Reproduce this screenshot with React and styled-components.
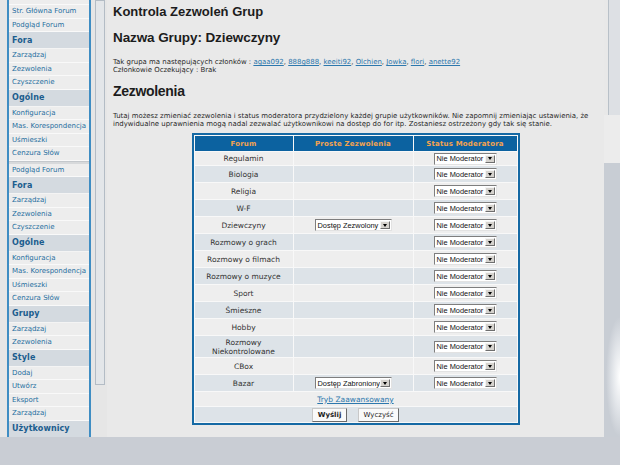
import React from 'react'
import styled, { createGlobalStyle } from 'styled-components'

const Global = createGlobalStyle`
  html, body {
    margin: 0;
    padding: 0;
    background: #c9cdd4;
  }
  body {
    font-family: "DejaVu Sans", Verdana, sans-serif;
  }
`

const Desktop = styled.div`
  width: 620px;
  height: 465px;
  overflow: hidden;
  display: flex;
  flex-direction: column;
  background: #c9cdd4;
`
const Frames = styled.div`
  display: flex;
  height: 437px;
  flex: none;
`
const LeftFrame = styled.div`
  width: 107px;
  flex: none;
  display: flex;
  align-items: flex-start;
  background: #e6e6e6;
  padding-left: 7px;
  box-sizing: border-box;
`
const SideNav = styled.nav`
  width: 84px;
  height: 437px;
  flex: none;
  box-sizing: border-box;
  border-left: 2px solid #3f8dc3;
  border-right: 2px solid #3f8dc3;
  background: #ededed;
  display: flex;
  flex-direction: column;
  overflow: hidden;
`
const NavItem = styled.div`
  height: ${p => p.h || 12.5}px;
  flex: none;
  border-bottom: 1px solid #f9f9f9;
  padding-left: 3px;
  display: flex;
  align-items: center;
  overflow: hidden;
  white-space: nowrap;
  font-size: 7px;
  color: #1f6e9f;
`
const NavHead = styled.div`
  height: 16px;
  flex: none;
  border-bottom: 1px solid #f4f4f4;
  background: #d4dae0;
  padding-left: 3px;
  display: flex;
  align-items: center;
  font-size: 8px;
  font-weight: bold;
  letter-spacing: 0.1px;
  color: #1b5d8e;
`
const NavSeam = styled.div`
  height: 3px;
  flex: none;
  background: #d7d9db;
  border-top: 1px solid #c4c8cc;
  box-sizing: border-box;
`
const ScrollTrack = styled.div`
  width: 10px;
  height: 385px;
  margin-left: 4px;
  flex: none;
  box-sizing: border-box;
  background: #e3e6e9;
  border: 1px solid #b3bcc5;
`

const Main = styled.main`
  flex: 1;
  background: #e9e9e9;
  padding: 4px 6px 0;
  overflow: hidden;
  color: #222;
`
const Title = styled.h1`
  margin: 0;
  font: bold 13px/16px "Liberation Sans", Arial, sans-serif;
  color: #1c1c1c;
`
const GroupName = styled.h2`
  margin: 10px 0 0;
  font: bold 13.5px/16px "Liberation Sans", Arial, sans-serif;
  letter-spacing: -0.1px;
  color: #1c1c1c;
`
const Small = styled.div`
  font-size: 6.95px;
  line-height: 8px;
  margin-top: ${p => p.mt || 0}px;
  color: #2a2a2a;
  white-space: nowrap;
`
const Link = styled.a`
  color: #2d78ad;
  text-decoration: underline;
`
const Section = styled.h2`
  margin: 9px 0 0;
  font: bold 14px/17px "Liberation Sans", Arial, sans-serif;
  letter-spacing: -0.3px;
  color: #1c1c1c;
`

const Table = styled.table`
  margin: 5px auto 0;
  width: 328px;
  border: 2px solid #1569a4;
  border-collapse: separate;
  border-spacing: 1px;
  background: #f8f8f8;
  table-layout: fixed;
`
const Th = styled.th`
  height: 15px;
  padding: 0;
  background: #0c62a0;
  color: #f4a24f;
  font-size: 7px;
  font-weight: bold;
  letter-spacing: 0.2px;
`
const Td = styled.td`
  height: ${p => p.h || 16}px;
  padding: 0;
  text-align: center;
  vertical-align: middle;
  font-size: 7.5px;
  line-height: 9px;
  color: #333;
  background: ${p => (p.dark ? '#dde3e8' : '#eeeeee')};
`
const SelectBox = styled.span`
  display: inline-flex;
  align-items: center;
  justify-content: space-between;
  vertical-align: middle;
  width: ${p => p.w}px;
  height: 12px;
  box-sizing: border-box;
  padding-left: 2px;
  padding-right: 1px;
  background: #fff;
  border: 1px solid;
  border-color: #7e7e7e #e2e2e2 #e2e2e2 #7e7e7e;
  font: 7.4px "Liberation Sans", Arial, sans-serif;
  color: #111;
  text-align: left;
  white-space: nowrap;
  overflow: hidden;
`
const Arrow = styled.span`
  width: 10px;
  height: 8px;
  flex: none;
  box-sizing: border-box;
  background: #d6d3ce;
  border: 1px solid;
  border-color: #f4f4f4 #6e6e6e #6e6e6e #f4f4f4;
  display: flex;
  align-items: center;
  justify-content: center;
  &::after {
    content: '';
    border-top: 3px solid #000;
    border-left: 2.5px solid transparent;
    border-right: 2.5px solid transparent;
  }
`
const Buttons = styled.div`
  display: flex;
  justify-content: center;
  gap: 11px;
`
const Button = styled.button`
  height: 14px;
  min-width: ${p => p.w}px;
  padding: 0 4px;
  box-sizing: border-box;
  background: #fafafa;
  border: 1px solid;
  border-color: #c8c8c8 #6a6a6a #6a6a6a #c8c8c8;
  font-family: "DejaVu Sans", Verdana, sans-serif;
  font-size: 7px;
  font-weight: ${p => (p.bold ? 'bold' : 'normal')};
  color: #222;
  cursor: pointer;
`
const Footer = styled.div`
  margin-top: 11px;
  text-align: center;
  font-size: 6.5px;
  color: #333;
`

const RightEdge = styled.div`
  width: 16px;
  flex: none;
  display: flex;
  flex-direction: column;
`
const RightTop = styled.div`
  height: 115px;
  flex: none;
  background: #e8e8e8;
  padding-left: 4px;
  display: flex;
`
const RightTrack = styled.div`
  flex: 1;
  background: #dde0e4;
  border-left: 1px solid #b8c0c8;
`
const RightMid = styled.div`
  height: 48px;
  flex: none;
  background: #ececec;
`
const RightGlow = styled.div`
  flex: 1;
  background: radial-gradient(ellipse 14px 60px at 100% 78%, #ffffff 0%, #e4e7eb 50%, #c8cdd4 100%);
`
const BottomBar = styled.div`
  flex: 1;
  background: #c9cdd4;
`

const nav = [
  ['i', '', 4],
  ['i', 'Str. Główna Forum'],
  ['i', 'Podgląd Forum'],
  ['h', 'Fora'],
  ['i', 'Zarządzaj'],
  ['i', 'Zezwolenia'],
  ['i', 'Czyszczenie'],
  ['h', 'Ogólne'],
  ['i', 'Konfiguracja'],
  ['i', 'Mas. Korespondencja'],
  ['i', 'Uśmieszki'],
  ['i', 'Cenzura Słów'],
  ['s'],
  ['i', 'Podgląd Forum'],
  ['h', 'Fora'],
  ['i', 'Zarządzaj'],
  ['i', 'Zezwolenia'],
  ['i', 'Czyszczenie'],
  ['h', 'Ogólne'],
  ['i', 'Konfiguracja'],
  ['i', 'Mas. Korespondencja'],
  ['i', 'Uśmieszki'],
  ['i', 'Cenzura Słów'],
  ['h', 'Grupy'],
  ['i', 'Zarządzaj'],
  ['i', 'Zezwolenia'],
  ['h', 'Style'],
  ['i', 'Dodaj'],
  ['i', 'Utwórz'],
  ['i', 'Eksport'],
  ['i', 'Zarządzaj'],
  ['h', 'Użytkownicy'],
]

const forums = [
  { name: 'Regulamin', h: 13 },
  { name: 'Biologia' },
  { name: 'Religia' },
  { name: 'W-F' },
  { name: 'Dziewczyny', perm: 'Dostęp Zezwolony' },
  { name: 'Rozmowy o grach' },
  { name: 'Rozmowy o filmach' },
  { name: 'Rozmowy o muzyce' },
  { name: 'Sport' },
  { name: 'Śmieszne' },
  { name: 'Hobby' },
  { name: 'Rozmowy Niekontrolowane', h: 21 },
  { name: 'CBox' },
  { name: 'Bazar', perm: 'Dostęp Zabroniony' },
]

const members = ['agaa092', '888g888', 'keeiti92', 'Olchien', 'Jowka', 'flori', 'anette92']

function Select({ w, children }) {
  return (
    <SelectBox w={w}>
      {children}
      <Arrow />
    </SelectBox>
  )
}

function App() {
  return (
    <Desktop>
      <Global />
      <Frames>
        <LeftFrame>
          <SideNav>
            {nav.map(([t, label, h], i) => {
              if (t === 'h') return <NavHead key={i}>{label}</NavHead>
              if (t === 's') return <NavSeam key={i} />
              return <NavItem key={i} h={h}>{label}</NavItem>
            })}
          </SideNav>
          <ScrollTrack />
        </LeftFrame>

        <Main>
          <Title>Kontrola Zezwoleń Grup</Title>
          <GroupName>Nazwa Grupy: Dziewczyny</GroupName>
          <Small mt={12}>
            Tak grupa ma następujących członków :{' '}
            {members.map((m, i) => (
              <React.Fragment key={m}>
                <Link href="#">{m}</Link>
                {i < members.length - 1 ? ', ' : ''}
              </React.Fragment>
            ))}
          </Small>
          <Small>Członkowie Oczekujący : Brak</Small>
          <Section>Zezwolenia</Section>
          <Small mt={12}>
            Tutaj możesz zmieniać zezwolenia i status moderatora przydzielony każdej grupie użytkowników. Nie zapomnij zmieniając ustawienia, że
            <br />
            indywidualne uprawnienia mogą nadal zezwalać użytkownikowi na dostęp do for itp. Zostaniesz ostrzeżony gdy tak się stanie.
          </Small>

          <Table>
            <colgroup>
              <col style={{ width: 98 }} />
              <col style={{ width: 119 }} />
              <col />
            </colgroup>
            <thead>
              <tr>
                <Th>Forum</Th>
                <Th>Proste Zezwolenia</Th>
                <Th>Status Moderatora</Th>
              </tr>
            </thead>
            <tbody>
              {forums.map((f, i) => (
                <tr key={f.name}>
                  <Td dark={i % 2 === 1} h={f.h}>{f.name}</Td>
                  <Td dark={i % 2 === 1} h={f.h}>
                    {f.perm && <Select w={77}>{f.perm}</Select>}
                  </Td>
                  <Td dark={i % 2 === 1} h={f.h}>
                    <Select w={63}>Nie Moderator</Select>
                  </Td>
                </tr>
              ))}
              <tr>
                <Td colSpan={3} h={14}>
                  <Link href="#">Tryb Zaawansowany</Link>
                </Td>
              </tr>
              <tr>
                <Td colSpan={3} dark h={15}>
                  <Buttons>
                    <Button bold w={35}>Wyślij</Button>
                    <Button w={41}>Wyczyść</Button>
                  </Buttons>
                </Td>
              </tr>
            </tbody>
          </Table>
          <Footer>Powered by phpBB 2.0.6 © 2001 phpBB Group</Footer>
        </Main>

        <RightEdge>
          <RightTop>
            <RightTrack />
          </RightTop>
          <RightMid />
          <RightGlow />
        </RightEdge>
      </Frames>
      <BottomBar />
    </Desktop>
  )
}

export default App
